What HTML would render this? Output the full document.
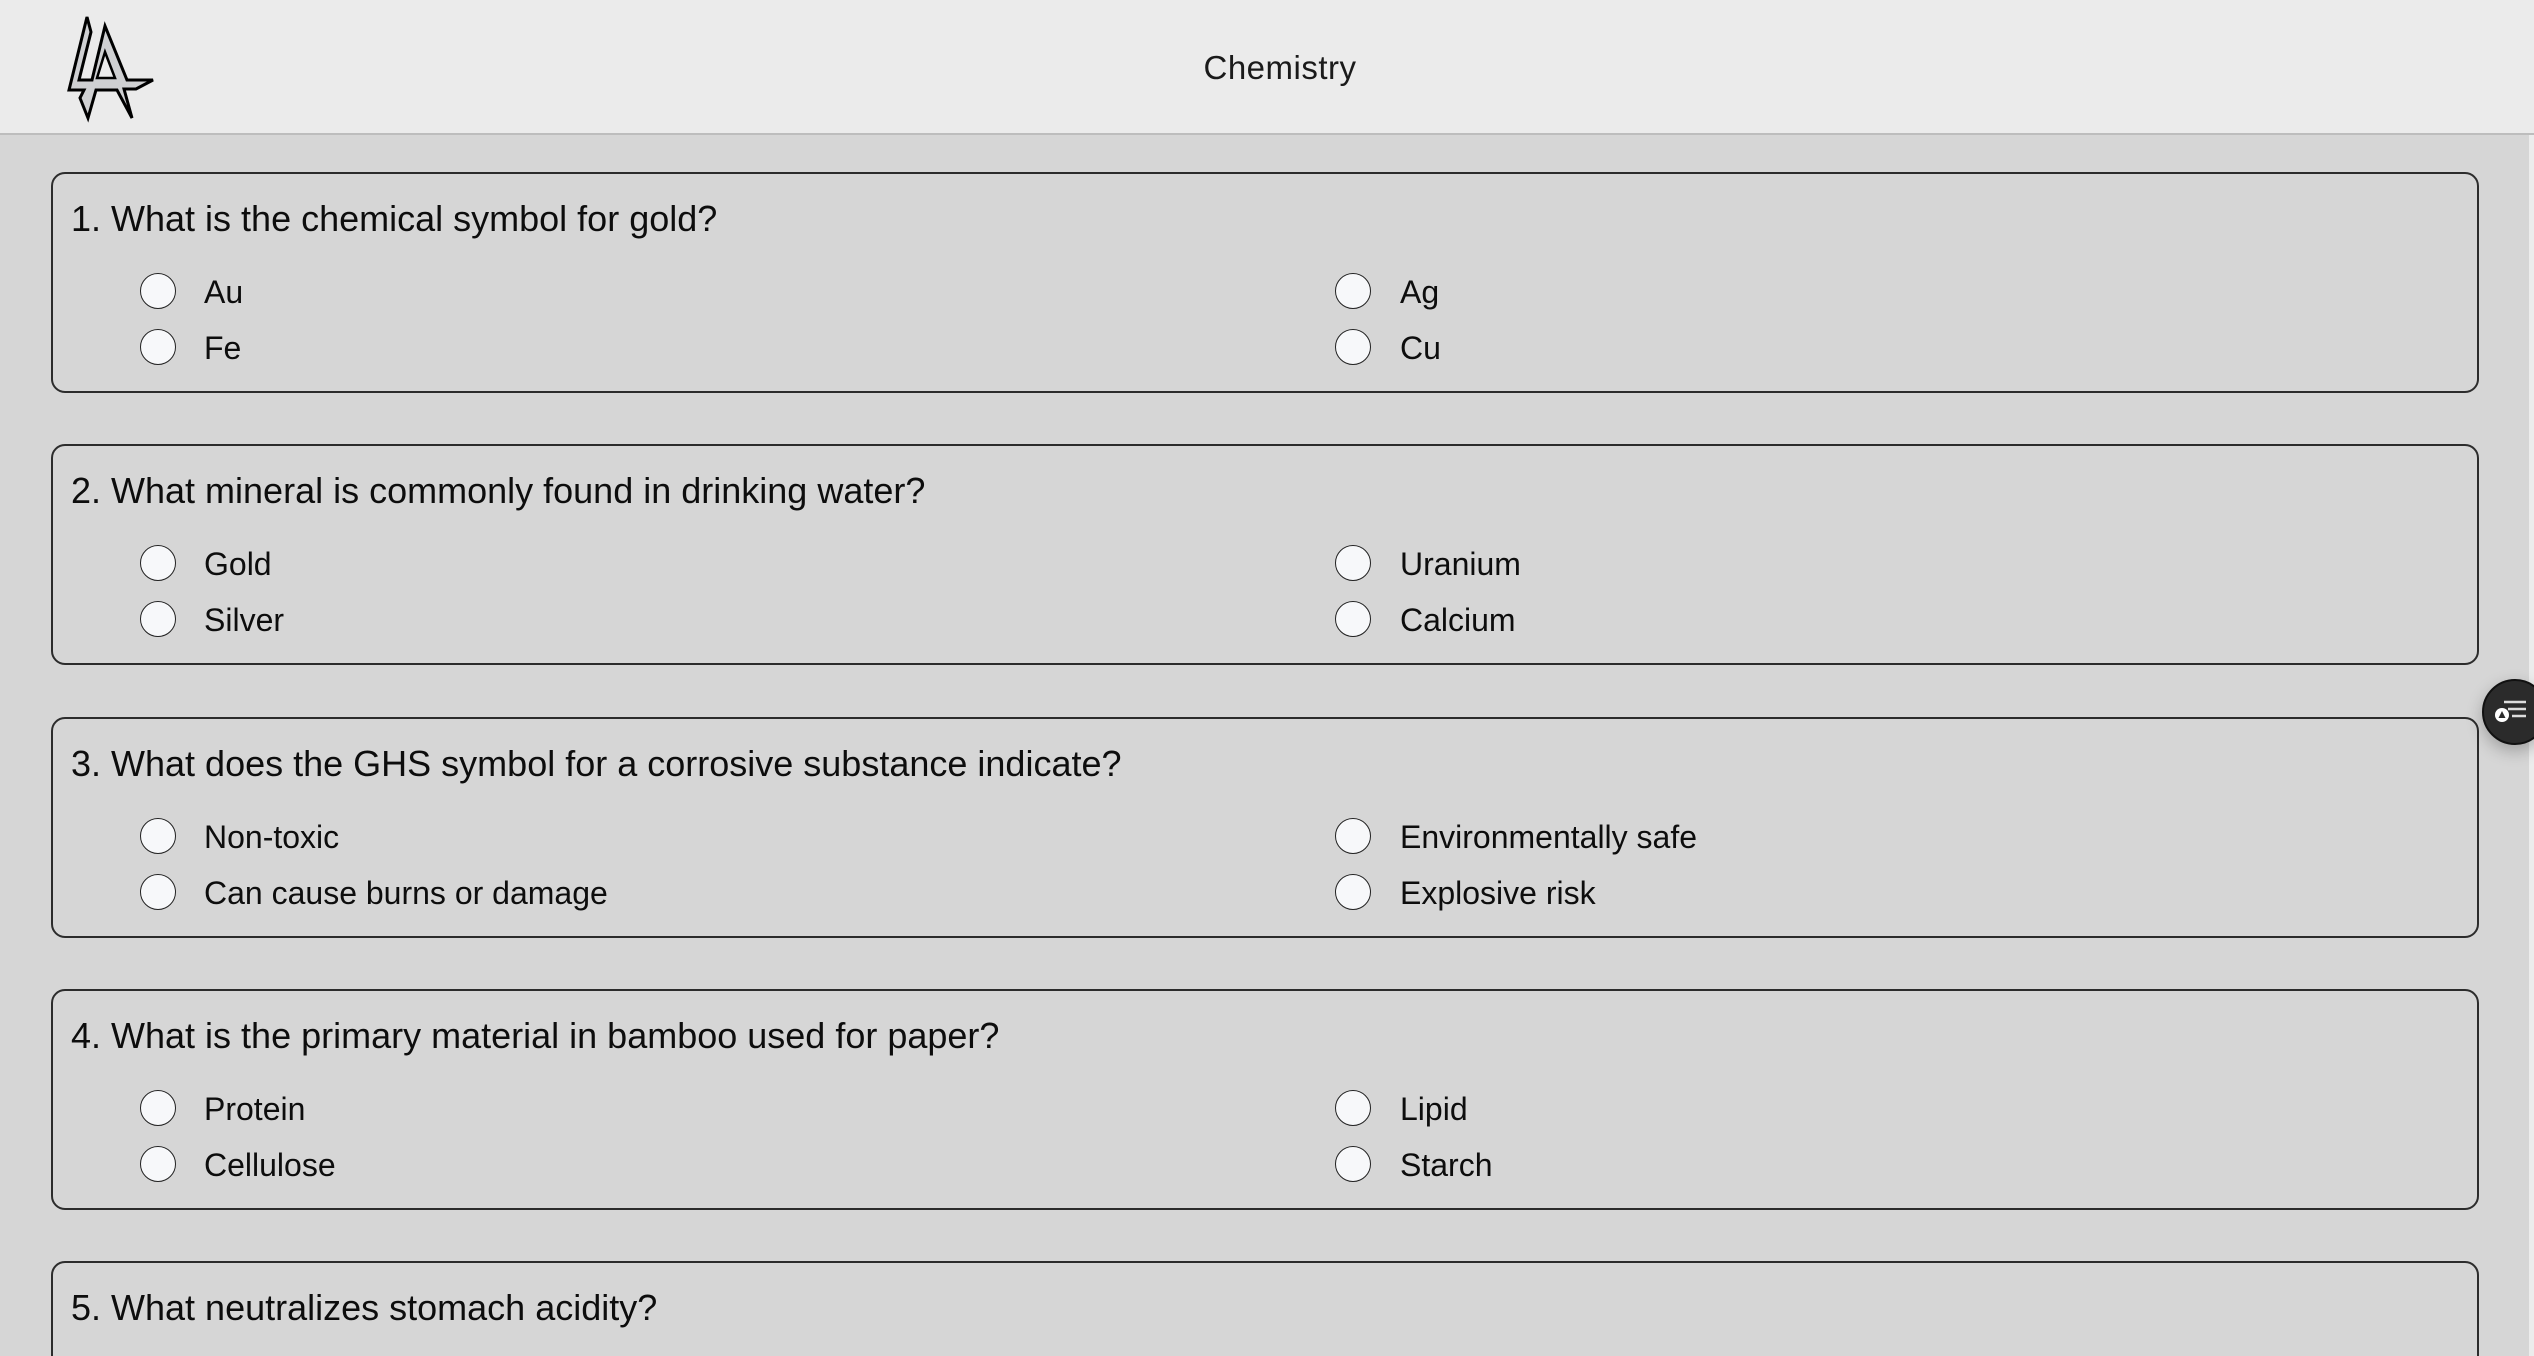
<!DOCTYPE html>
<html><head><meta charset="utf-8"><style>
*{margin:0;padding:0;box-sizing:border-box}
html,body{width:2534px;height:1356px;overflow:hidden;background:#d6d6d6;font-family:"Liberation Sans",sans-serif;color:#111}
.wrap{position:absolute;left:0;top:0;width:2534px;height:1356px;overflow:hidden}
.hdr{position:absolute;left:0;top:0;width:2534px;height:135px;background:#ebebeb;border-bottom:2px solid #bdbdbd}
.title{position:absolute;left:0;width:2560px;text-align:center;top:49px;font-size:33px;letter-spacing:0.5px;color:#1a1a1a}
.strip{position:absolute;right:0;top:135px;width:5px;height:1221px;background:#ececec}
.card{position:absolute;left:51px;width:2428px;height:221px;border:2px solid #2c2c2c;border-radius:14px}
.q{position:absolute;left:18px;top:24px;font-size:36px;white-space:nowrap;color:#0d0d0d}
.o{position:absolute;font-size:32px;white-space:nowrap;color:#0d0d0d}
.r{position:absolute;width:36px;height:36px;border:1.5px solid #222;border-radius:50%;background:#f7f8fa}
.fab{position:absolute;left:2482px;top:679px;width:66px;height:66px;border-radius:50%;background:#2b2b2b;border:2px solid #111;box-shadow:0 6px 16px rgba(0,0,0,.25)}
</style></head><body><div class="wrap">
<div class="hdr">
<svg style="position:absolute;left:60px;top:10px" width="100" height="115" viewBox="60 10 100 115">
<polygon points="87,17 91,32 79,80 92,80 105,26 127,80 153,80 136,89 124,89 132,118 117,90 96,90 88,118 80,98 84,90 69,90" fill="#cfd0d2" stroke="#000" stroke-width="3" stroke-linejoin="miter"/>
<polygon points="105,52 97,78 115,78" fill="#ebebeb" stroke="#000" stroke-width="2.5"/>
</svg>
<div class="title">Chemistry</div>
</div>
<div class="strip"></div>

<div class="card" style="top:172px">
<div class="q">1. What is the chemical symbol for gold?</div>
<div class="r" style="left:87px;top:99px"></div><div class="o" style="left:151px;top:100px">Au</div>
<div class="r" style="left:87px;top:155px"></div><div class="o" style="left:151px;top:156px">Fe</div>
<div class="r" style="left:1282px;top:99px"></div><div class="o" style="left:1347px;top:100px">Ag</div>
<div class="r" style="left:1282px;top:155px"></div><div class="o" style="left:1347px;top:156px">Cu</div>
</div>

<div class="card" style="top:444px">
<div class="q">2. What mineral is commonly found in drinking water?</div>
<div class="r" style="left:87px;top:99px"></div><div class="o" style="left:151px;top:100px">Gold</div>
<div class="r" style="left:87px;top:155px"></div><div class="o" style="left:151px;top:156px">Silver</div>
<div class="r" style="left:1282px;top:99px"></div><div class="o" style="left:1347px;top:100px">Uranium</div>
<div class="r" style="left:1282px;top:155px"></div><div class="o" style="left:1347px;top:156px">Calcium</div>
</div>

<div class="card" style="top:717px">
<div class="q">3. What does the GHS symbol for a corrosive substance indicate?</div>
<div class="r" style="left:87px;top:99px"></div><div class="o" style="left:151px;top:100px">Non-toxic</div>
<div class="r" style="left:87px;top:155px"></div><div class="o" style="left:151px;top:156px">Can cause burns or damage</div>
<div class="r" style="left:1282px;top:99px"></div><div class="o" style="left:1347px;top:100px">Environmentally safe</div>
<div class="r" style="left:1282px;top:155px"></div><div class="o" style="left:1347px;top:156px">Explosive risk</div>
</div>

<div class="card" style="top:989px">
<div class="q">4. What is the primary material in bamboo used for paper?</div>
<div class="r" style="left:87px;top:99px"></div><div class="o" style="left:151px;top:100px">Protein</div>
<div class="r" style="left:87px;top:155px"></div><div class="o" style="left:151px;top:156px">Cellulose</div>
<div class="r" style="left:1282px;top:99px"></div><div class="o" style="left:1347px;top:100px">Lipid</div>
<div class="r" style="left:1282px;top:155px"></div><div class="o" style="left:1347px;top:156px">Starch</div>
</div>

<div class="card" style="top:1261px;height:120px">
<div class="q">5. What neutralizes stomach acidity?</div>
</div>

<div class="fab">
<svg width="66" height="66" viewBox="0 0 66 66" style="position:absolute;left:-2px;top:-2px">
<line x1="22" y1="23" x2="44" y2="23" stroke="#ddd" stroke-width="2.5"/>
<line x1="26" y1="30" x2="44" y2="30" stroke="#ddd" stroke-width="2.5"/>
<line x1="30" y1="37" x2="44" y2="37" stroke="#ddd" stroke-width="2.5"/>
<circle cx="20" cy="36" r="7" fill="#fff"/>
<polygon points="20,32 23.5,39 16.5,39" fill="#2b2b2b"/>
</svg>
</div>
</div></body></html>
